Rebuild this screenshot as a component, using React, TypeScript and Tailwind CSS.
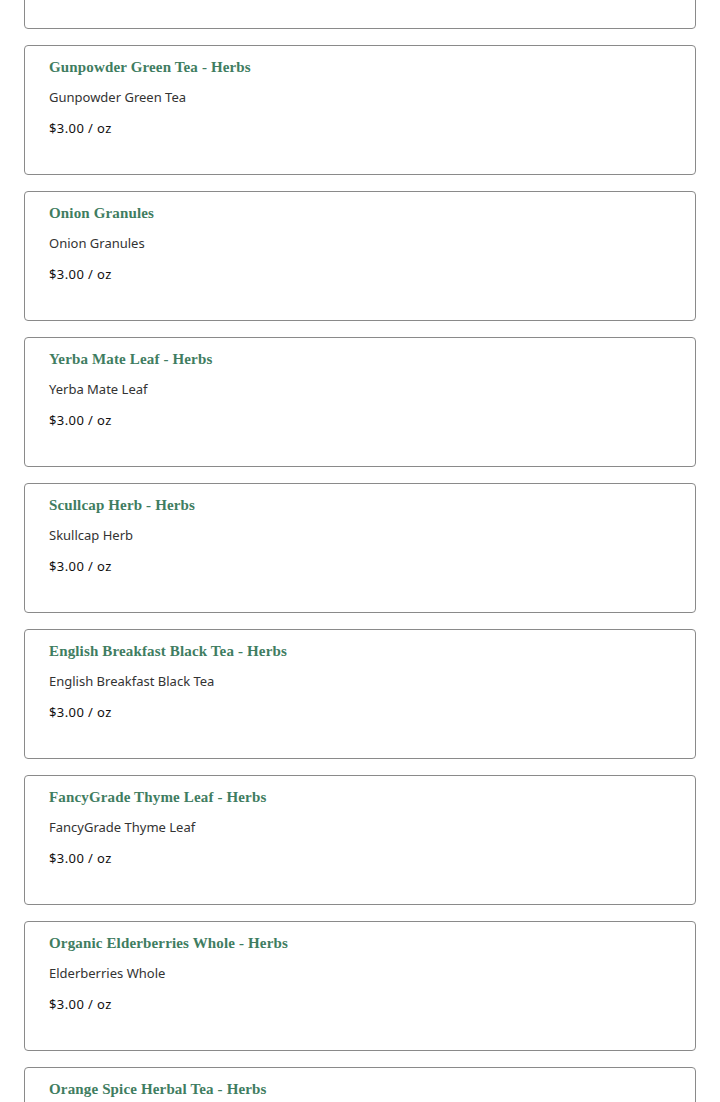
import React from "react";

const items = [
  { title: "Gunpowder Green Tea - Herbs", desc: "Gunpowder Green Tea" },
  { title: "Onion Granules", desc: "Onion Granules" },
  { title: "Yerba Mate Leaf - Herbs", desc: "Yerba Mate Leaf" },
  { title: "Scullcap Herb - Herbs", desc: "Skullcap Herb" },
  { title: "English Breakfast Black Tea - Herbs", desc: "English Breakfast Black Tea" },
  { title: "FancyGrade Thyme Leaf - Herbs", desc: "FancyGrade Thyme Leaf" },
  { title: "Organic Elderberries Whole - Herbs", desc: "Elderberries Whole" },
  { title: "Orange Spice Herbal Tea - Herbs", desc: "" },
];

export default function App() {
  return (
    <div className="h-[1102px] overflow-hidden bg-white">
      <div className="mt-[-101px] flex flex-col gap-4 px-6">
        <div className="h-[130px] rounded-[4px] border border-[#8a8a8a]" />
        {items.map((it, i) => (
          <div
            key={i}
            className="h-[130px] rounded-[4px] border border-[#8a8a8a] px-6 pt-[9px]"
          >
            <div
              className="text-[15px] font-bold leading-[24px] tracking-[0.15px] text-[#3f7d61]"
              style={{ fontFamily: '"Liberation Serif", serif' }}
            >
              {it.title}
            </div>
            {it.desc && (
              <>
                <div
                  className="mt-[8px] text-[13px] leading-[20px] text-[#333333]"
                  style={{ fontFamily: '"Noto Sans", sans-serif' }}
                >
                  {it.desc}
                </div>
                <div
                  className="mt-[11px] text-[13px] leading-[20px] tracking-[0.4px] text-[#111111]"
                  style={{ fontFamily: '"Noto Sans", sans-serif' }}
                >
                  $3.00 / oz
                </div>
              </>
            )}
          </div>
        ))}
      </div>
    </div>
  );
}
